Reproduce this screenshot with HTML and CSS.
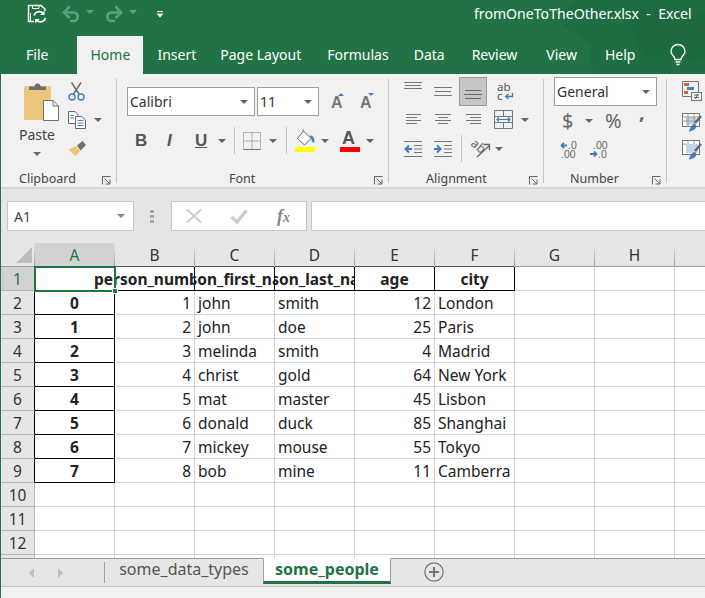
FILE: index.html
```html
<!DOCTYPE html>
<html lang="en">
<head>
    <meta charset="UTF-8">
    <title>fromOneToTheOther.xlsx - Excel</title>
    <link rel="stylesheet" href="styles.css">
</head>
<body>
<div class="window">

    <!-- green header: quick access + tabs -->
    <header class="header">
        <svg class="header-pattern" width="170" height="74" viewBox="0 0 170 74">
            <path d="M40 0 L170 0 L170 74 L60 74 C50 60 62 50 50 40 C34 30 20 22 28 12 Z" fill="#1f6d42"/>
            <path d="M100 10 C125 5 150 20 170 12 L170 60 C150 66 130 50 110 56 C100 40 92 24 100 10 Z" fill="#1d6a40"/>
        </svg>
        <div class="titlebar">
            <svg class="qat-save" width="20" height="20" viewBox="0 0 20 20" fill="none" stroke="#fff">
                <path d="M7 17.500H1.500V1.500H14L18 5V7" stroke-width="1.400"/>
                <path d="M5.500 1.500V4.500H12V1.500M3.500 9V17" stroke-width="1"/>
                <path d="M7 11.500A5.300 5.300 0 0 1 16.500 10M18.500 14A5.300 5.300 0 0 1 9 15.500" stroke-width="1.600"/>
                <path d="M17.500 6.500V11H13ZM8 19.500V15H12.500Z" fill="#fff" stroke="none"/>
            </svg>
            <svg class="qat-undo" width="18" height="18" viewBox="0 0 18 18" fill="none" stroke="#5f9e7e" stroke-width="2.600">
                <path d="M2.500 7.500H11.500A4.200 4.200 0 0 1 11.500 16H8"/>
                <path d="M7.500 1.500L2 7.500L7.500 13"/>
            </svg>
            <span class="qat-caret"></span>
            <svg class="qat-redo" width="18" height="18" viewBox="0 0 18 18" fill="none" stroke="#5f9e7e" stroke-width="2.600">
                <path d="M15.500 7.500H6.500A4.200 4.200 0 0 0 6.500 16H10"/>
                <path d="M10.500 1.500L16 7.500L10.500 13"/>
            </svg>
            <span class="qat-caret"></span>
            <svg class="qat-more" width="8" height="7" viewBox="0 0 8 7">
                <path d="M1 0.500H7" stroke="#fff"/>
                <path d="M0.500 2.500H7.500L4 6.500Z" fill="#fff"/>
            </svg>
            <div class="doc-title">fromOneToTheOther.xlsx&nbsp; -&nbsp; Excel</div>
        </div>
        <nav class="tabs">
            <a class="tab tab-file">File</a>
            <a class="tab tab-home">Home</a>
            <a class="tab tab-insert">Insert</a>
            <a class="tab tab-layout">Page Layout</a>
            <a class="tab tab-formulas">Formulas</a>
            <a class="tab tab-data">Data</a>
            <a class="tab tab-review">Review</a>
            <a class="tab tab-view">View</a>
            <a class="tab tab-help">Help</a>
            <svg class="bulb" width="16" height="22" viewBox="0 0 16 22" fill="none" stroke="#fff" stroke-width="1.300">
                <path d="M5 15.500C5 12 1 11 1 7.500A7 7 0 0 1 15 7.500C15 11 11 12 11 15.500Z"/>
                <path d="M5.500 18H10.500M6.500 20.500H9.500"/>
            </svg>
        </nav>
    </header>

    <!-- ribbon -->
    <section class="ribbon">

        <div class="group group-clipboard">
            <div class="clip-body">
                <div class="paste">
                    <svg width="36" height="42" viewBox="0 0 36 42">
                        <rect x="0" y="4" width="27" height="34" rx="1.500" fill="#edc67e"/>
                        <path d="M5 8V4.500H10.500A3 3 0 0 1 16.500 4.500H22V8Z" fill="#6f6f6f"/>
                        <path d="M19.500 18.500H29L34.500 24V38.500H19.500Z" fill="#fff" stroke="#6f6f6f"/>
                        <path d="M29 18.500V24H34.500" fill="none" stroke="#6f6f6f"/>
                    </svg>
                    <span class="paste-label">Paste</span>
                    <span class="caret"></span>
                </div>
                <div class="clip-tools">
                    <svg class="tool-cut" width="17" height="19" viewBox="0 0 17 19" fill="none">
                        <path d="M3.500 0.500L11 12M13 0.500L5.500 12" stroke="#6a6a6a" stroke-width="1.500"/>
                        <circle cx="4" cy="15" r="3" stroke="#3f7fc1" stroke-width="1.400"/>
                        <circle cx="13" cy="15" r="3" stroke="#3f7fc1" stroke-width="1.400"/>
                    </svg>
                    <div class="tool-copy">
                        <svg width="18" height="18" viewBox="0 0 18 18" fill="#fff" stroke="#666">
                            <path d="M0.500 0.500H7L10 3.500V12.500H0.500Z"/>
                            <path d="M7.500 5.500H13.500L17.500 9V17.500H7.500Z"/>
                            <path d="M2.500 4.500H6M2.500 7H6M9.500 9.500H15.500M9.500 12H15.500M9.500 14.500H15.500" stroke="#3f7fc1"/>
                        </svg>
                        <span class="caret"></span>
                    </div>
                    <svg class="tool-painter" width="19" height="17" viewBox="0 0 19 17">
                        <path d="M0.500 9.500L8 6L12 11L7.500 16.500C5 14 3 11 0.500 9.500Z" fill="#edc67e"/>
                        <path d="M9 5.500L14.500 1L18 5L12.500 10.500Z" fill="#6f6f6f"/>
                    </svg>
                </div>
            </div>
            <div class="group-foot">
                <span class="group-label">Clipboard</span>
                <svg class="launcher" width="9" height="9" viewBox="0 0 9 9" fill="none" stroke="#666"><path d="M0.500 8.500V0.500H8.500M2.500 2.500L7.500 7.500M8 3.500V8H3.500"/></svg>
            </div>
        </div>

        <div class="group group-font">
            <div class="font-row1">
                <div class="select select-font"><span>Calibri</span><span class="caret"></span></div>
                <div class="select select-size"><span>11</span><span class="caret"></span></div>
                <svg class="font-grow" width="16" height="20" viewBox="0 0 16 20">
                    <text x="0" y="16" class="svg-a">A</text>
                    <path d="M7 4L10 1L13 4Z" fill="#3f7fc1"/>
                </svg>
                <svg class="font-shrink" width="16" height="20" viewBox="0 0 16 20">
                    <text x="0" y="16" class="svg-a">A</text>
                    <path d="M8 1H14L11 4Z" fill="#3f7fc1"/>
                </svg>
            </div>
            <div class="font-row2">
                <span class="fmt fmt-b">B</span>
                <span class="fmt fmt-i">I</span>
                <span class="fmt fmt-u">U</span>
                <span class="caret"></span>
                <span class="rule"></span>
                <svg width="18" height="18" viewBox="0 0 18 18" fill="none" stroke="#777">
                    <path d="M0.500 0.500H17.500V17.500H0.500ZM9 0.500V17.500M0.500 9H17.500" stroke-dasharray="1 1"/>
                    <path d="M0.500 17.500H17.500"/>
                </svg>
                <span class="caret"></span>
                <span class="rule"></span>
                <svg width="21" height="23" viewBox="0 0 21 23">
                    <path d="M8.500 2L16 9.500L9.500 16L2.500 9.500Z" fill="#fff" stroke="#666"/>
                    <path d="M8 2.500V0.500" stroke="#666"/>
                    <path d="M14.500 6.500C17 6 19.500 8 19.500 12C19.500 14 17.500 14 17 12C16.800 10.500 16 9.500 14.500 6.500Z" fill="#3f7fc1"/>
                    <rect x="0" y="18" width="20" height="5" fill="#ffff00"/>
                </svg>
                <span class="caret"></span>
                <svg width="20" height="23" viewBox="0 0 20 23">
                    <text x="2" y="15" class="svg-color-a">A</text>
                    <rect x="0" y="18" width="20" height="5" fill="#ff0000"/>
                </svg>
                <span class="caret"></span>
            </div>
            <div class="group-foot">
                <span class="group-label">Font</span>
                <svg class="launcher" width="9" height="9" viewBox="0 0 9 9" fill="none" stroke="#666"><path d="M0.500 8.500V0.500H8.500M2.500 2.500L7.500 7.500M8 3.500V8H3.500"/></svg>
            </div>
        </div>

        <div class="group group-align">
            <div class="align-row1">
                <svg class="align-top" width="18" height="8" viewBox="0 0 18 8" stroke="#777"><path d="M0 0.500H18M1 3.500H17M0 6.500H18"/></svg>
                <svg width="18" height="11" viewBox="0 0 18 11" stroke="#777"><path d="M0 1.500H18M1 5.500H17M0 9.500H18"/></svg>
                <div class="align-active">
                    <svg width="18" height="11" viewBox="0 0 18 11" stroke="#666"><path d="M1 1.500H17M0 5.500H18M1 9.500H17"/></svg>
                </div>
                <svg class="align-wrap" width="17" height="18" viewBox="0 0 17 18">
                    <text x="0" y="8" class="svg-small">ab</text>
                    <text x="0" y="17" class="svg-small">c</text>
                    <path d="M15.500 10V13.500H9M11.500 11L8.500 13.500L11.500 16" fill="none" stroke="#3f7fc1" stroke-width="1.300"/>
                </svg>
            </div>
            <div class="align-row2">
                <svg width="15" height="11" viewBox="0 0 15 11" stroke="#777"><path d="M0 0.500H15M0 3.500H11M0 6.500H15M0 9.500H11"/></svg>
                <svg width="16" height="11" viewBox="0 0 16 11" stroke="#777"><path d="M0 0.500H16M3 3.500H13M0 6.500H16M3 9.500H13"/></svg>
                <svg width="15" height="11" viewBox="0 0 15 11" stroke="#777"><path d="M0 0.500H15M4 3.500H15M0 6.500H15M4 9.500H15"/></svg>
                <svg width="19" height="19" viewBox="0 0 19 19" fill="none">
                    <path d="M0.500 0.500H18.500V18.500H0.500ZM0.500 6.500H18.500M0.500 12.500H18.500M9.500 0.500V6.500M9.500 12.500V18.500" stroke="#777"/>
                    <rect x="1" y="7" width="17" height="5" fill="#f1f1f1"/>
                    <path d="M3 9.500H16M5 7.500L3 9.500L5 11.500M14 7.500L16 9.500L14 11.500" stroke="#3f7fc1" stroke-width="1.200"/>
                </svg>
                <span class="caret"></span>
            </div>
            <div class="align-row3">
                <svg width="18" height="16" viewBox="0 0 18 16" fill="none">
                    <path d="M0 0.500H18M10 4.500H18M10 8H18M10 11.500H18M0 15.500H18" stroke="#777"/>
                    <path d="M8 8H1.500M5 4.500L1.500 8L5 11.500" stroke="#3f7fc1" stroke-width="2"/>
                </svg>
                <svg width="18" height="16" viewBox="0 0 18 16" fill="none">
                    <path d="M0 0.500H18M10 4.500H18M10 8H18M10 11.500H18M0 15.500H18" stroke="#777"/>
                    <path d="M0 8H6.500M3 4.500L6.500 8L3 11.500" stroke="#3f7fc1" stroke-width="2"/>
                </svg>
                <span class="rule"></span>
                <svg class="align-orient" width="20" height="19" viewBox="0 0 20 19" fill="none">
                    <text x="0" y="10" class="svg-orient" transform="rotate(40 6 8)">ab</text>
                    <path d="M7 18L19 7M13.500 5.500H19.500V11" stroke="#666" stroke-width="1.300"/>
                </svg>
                <span class="caret"></span>
            </div>
            <div class="group-foot">
                <span class="group-label">Alignment</span>
                <svg class="launcher" width="9" height="9" viewBox="0 0 9 9" fill="none" stroke="#666"><path d="M0.500 8.500V0.500H8.500M2.500 2.500L7.500 7.500M8 3.500V8H3.500"/></svg>
            </div>
        </div>

        <div class="group group-number">
            <div class="select select-format"><span>General</span><span class="caret"></span></div>
            <div class="number-row2">
                <span class="num-sym num-dollar">$</span>
                <span class="caret"></span>
                <span class="num-sym num-pct">%</span>
                <span class="num-sym num-comma">,</span>
            </div>
            <div class="number-row3">
                <svg width="16" height="17" viewBox="0 0 16 17">
                    <path d="M7 4.500H1.500M4 2L1.500 4.500L4 7" fill="none" stroke="#3f7fc1" stroke-width="1.800"/>
                    <text x="8" y="8" class="svg-dec">.0</text>
                    <text x="1" y="17" class="svg-dec">.00</text>
                </svg>
                <svg width="16" height="17" viewBox="0 0 16 17">
                    <text x="3" y="8" class="svg-dec">.00</text>
                    <path d="M0 13H6.500M4 10.500L6.500 13L4 15.500" fill="none" stroke="#3f7fc1" stroke-width="1.800"/>
                    <text x="8" y="17" class="svg-dec">.0</text>
                </svg>
            </div>
            <div class="group-foot">
                <span class="group-label">Number</span>
                <svg class="launcher" width="9" height="9" viewBox="0 0 9 9" fill="none" stroke="#666"><path d="M0.500 8.500V0.500H8.500M2.500 2.500L7.500 7.500M8 3.500V8H3.500"/></svg>
            </div>
        </div>

        <div class="group-styles">
            <svg width="20" height="20" viewBox="0 0 20 20" fill="none">
                <path d="M0.500 0.500H16.500V15.500H0.500Z" stroke="#777"/>
                <rect x="2" y="2" width="5" height="3" fill="#d5633a"/>
                <rect x="5" y="6" width="7" height="3" fill="#3f7fc1"/>
                <rect x="2" y="10" width="4" height="3" fill="#d5633a"/>
                <rect x="9.500" y="11.500" width="10" height="8" fill="#f1f1f1" stroke="#777"/>
                <path d="M12 14H17M12 16.500H17M15.500 13L13.500 18" stroke="#666"/>
            </svg>
            <svg width="20" height="19" viewBox="0 0 20 19" fill="none">
                <rect x="0.500" y="0.500" width="17" height="13" fill="#fff" stroke="#777"/>
                <rect x="4" y="4" width="10" height="8" fill="#c5d5e8"/>
                <path d="M0.500 4H17.500M0.500 8H17.500M6 0.500V13.500M12 0.500V13.500" stroke="#999"/>
                <path d="M13 10L19 3" stroke="#666" stroke-width="2.500"/>
                <path d="M7 18.500C8 14 10 11.500 13 11L14.500 13C14 16 11 18 7 18.500Z" fill="#3f7fc1"/>
            </svg>
            <svg width="20" height="20" viewBox="0 0 20 20" fill="none">
                <rect x="0.500" y="0.500" width="17" height="14" fill="#fff" stroke="#777"/>
                <rect x="4" y="4" width="12" height="9" fill="#c5d5e8"/>
                <path d="M0.500 4H4M6 0.500V4M12 0.500V4" stroke="#999"/>
                <path d="M13 11L19 4" stroke="#666" stroke-width="2.500"/>
                <path d="M7 19.500C8 15 10 12.500 13 12L14.500 14C14 17 11 19 7 19.500Z" fill="#3f7fc1"/>
            </svg>
        </div>
    </section>

    <!-- name box + formula bar -->
    <section class="formula-band">
        <div class="name-box"><span>A1</span><span class="caret"></span></div>
        <span class="grip"></span>
        <div class="fx-buttons">
            <svg class="fx-cancel" width="16" height="16" viewBox="0 0 16 16" fill="none" stroke="#cdcdcd" stroke-width="2"><path d="M1 1.500L15 14.500M15 1.500L1 14.500"/></svg>
            <svg class="fx-enter" width="18" height="15" viewBox="0 0 18 15" fill="none" stroke="#cdcdcd" stroke-width="3.500"><path d="M1.500 8L7 13L16.500 1.500"/></svg>
            <span class="fx-label"><i>f</i><i class="fx-x">x</i></span>
        </div>
        <div class="formula-input"></div>
    </section>

    <!-- sheet -->
    <section class="sheet">
        <table class="grid">
            <colgroup>
                <col class="col-head">
                <col class="col-cell"><col class="col-cell"><col class="col-cell"><col class="col-cell">
                <col class="col-cell"><col class="col-cell"><col class="col-cell"><col class="col-cell">
                <col class="col-cell">
            </colgroup>
            <thead>
                <tr>
                    <th class="corner"><span class="corner-mark"></span></th>
                    <th class="active-col">A</th><th class="used">B</th><th class="used">C</th><th class="used">D</th><th class="used">E</th><th class="used">F</th><th>G</th><th>H</th><th></th>
                </tr>
            </thead>
            <tbody>
                <tr class="title-row">
                    <th class="row-num active-row">1</th>
                    <td class="blk"></td>
                    <td class="blk spill-left"><div class="mid">person_number</div></td>
                    <td class="blk clipped"><div class="mid">person_first_name</div></td>
                    <td class="blk clipped"><div class="mid">person_last_name</div></td>
                    <td class="blk"><div class="mid">age</div></td>
                    <td class="blk"><div class="mid">city</div></td>
                    <td></td><td></td><td></td>
                </tr>
                <tr><th class="row-num side">2</th><td class="blk idx">0</td><td class="n">1</td><td>john</td><td>smith</td><td class="n">12</td><td>London</td><td></td><td></td><td></td></tr>
                <tr><th class="row-num side">3</th><td class="blk idx">1</td><td class="n">2</td><td>john</td><td>doe</td><td class="n">25</td><td>Paris</td><td></td><td></td><td></td></tr>
                <tr><th class="row-num side">4</th><td class="blk idx">2</td><td class="n">3</td><td>melinda</td><td>smith</td><td class="n">4</td><td>Madrid</td><td></td><td></td><td></td></tr>
                <tr><th class="row-num side">5</th><td class="blk idx">3</td><td class="n">4</td><td>christ</td><td>gold</td><td class="n">64</td><td>New York</td><td></td><td></td><td></td></tr>
                <tr><th class="row-num side">6</th><td class="blk idx">4</td><td class="n">5</td><td>mat</td><td>master</td><td class="n">45</td><td>Lisbon</td><td></td><td></td><td></td></tr>
                <tr><th class="row-num side">7</th><td class="blk idx">5</td><td class="n">6</td><td>donald</td><td>duck</td><td class="n">85</td><td>Shanghai</td><td></td><td></td><td></td></tr>
                <tr><th class="row-num side">8</th><td class="blk idx">6</td><td class="n">7</td><td>mickey</td><td>mouse</td><td class="n">55</td><td>Tokyo</td><td></td><td></td><td></td></tr>
                <tr><th class="row-num side">9</th><td class="blk idx">7</td><td class="n">8</td><td>bob</td><td>mine</td><td class="n">11</td><td>Camberra</td><td></td><td></td><td></td></tr>
                <tr><th class="row-num">10</th><td></td><td></td><td></td><td></td><td></td><td></td><td></td><td></td><td></td></tr>
                <tr><th class="row-num">11</th><td></td><td></td><td></td><td></td><td></td><td></td><td></td><td></td><td></td></tr>
                <tr><th class="row-num">12</th><td></td><td></td><td></td><td></td><td></td><td></td><td></td><td></td><td></td></tr>
                <tr><th class="row-num"></th><td></td><td></td><td></td><td></td><td></td><td></td><td></td><td></td><td></td></tr>
            </tbody>
        </table>
        <div class="sel-frame"><span class="handle"></span></div>
    </section>

    <!-- sheet tabs -->
    <footer class="sheet-bar">
        <span class="nav-arrow nav-prev"></span>
        <span class="nav-arrow nav-next"></span>
        <span class="sheet-sep"></span>
        <span class="sheet-tab">some_data_types</span>
        <span class="sheet-tab sheet-tab-active">some_people</span>
        <svg class="add-sheet" width="20" height="20" viewBox="0 0 20 20" fill="none" stroke="#777">
            <circle cx="10" cy="10" r="9.200" stroke-width="1.200"/>
            <path d="M10 5V15M5 10H15" stroke-width="2"/>
        </svg>
    </footer>
    <div class="status-bar"></div>
</div>
</body>
</html>
```

FILE: styles.css
```css
* {
    box-sizing: border-box;
}

body {
    margin: 0;
    font-family: "Noto Sans", sans-serif;
    color: #444;
}

svg {
    overflow: visible;
}

.window {
    width: 705px;
    height: 598px;
    overflow: hidden;
    border-left: 1px solid #217346;
    background-color: #e6e6e6;
}

/* header */
.header {
    position: relative;
    height: 74px;
    margin-left: -1px;
    background-color: #217346;
    color: #fff;
}

.header-pattern {
    position: absolute;
    top: 0;
    right: 0;
    overflow: hidden;
}

.titlebar {
    position: relative;
    display: flex;
    align-items: center;
    height: 36px;
    padding: 0 0 8px 27px;
}

.qat-undo {
    margin-left: 15px;
}

.qat-redo {
    margin-left: 11px;
}

.qat-caret {
    width: 0;
    height: 0;
    margin-left: 6px;
    border-left: 4px solid transparent;
    border-right: 4px solid transparent;
    border-top: 4px solid #5f9e7e;
    margin-top: -5px;
}

.qat-more {
    margin-left: 19px;
}

.doc-title {
    position: absolute;
    top: 3px;
    left: 474px;
    font-size: 14.100px;
    line-height: 22px;
    white-space: nowrap;
}

.tabs {
    position: relative;
    display: flex;
    align-items: center;
    height: 38px;
    font-size: 14px;
}

.tab {
    height: 38px;
    line-height: 38px;
    white-space: nowrap;
}

.tab-file { margin-left: 26px; }
.tab-insert { margin-left: 14px; }
.tab-layout { margin-left: 24px; }
.tab-formulas { margin-left: 26px; }
.tab-data { margin-left: 25px; }
.tab-review { margin-left: 27px; }
.tab-view { margin-left: 29px; }
.tab-help { margin-left: 28px; }

.tab-home {
    width: 66px;
    margin-left: 29px;
    background-color: #f1f1f1;
    color: #217346;
    text-align: center;
}

.bulb {
    margin-left: 35px;
}

/* ribbon */
.ribbon {
    display: flex;
    height: 115px;
    background-color: #f1f1f1;
    border-bottom: 2px solid #d6d6d6;
    font-size: 13px;
    overflow: hidden;
}

.group {
    display: flex;
    flex-direction: column;
    height: 104px;
    margin-top: 5px;
    border-right: 1px solid #c6c6c6;
}

.group-foot {
    display: flex;
    align-items: center;
    justify-content: space-between;
    height: 16px;
    margin-top: auto;
    margin-bottom: -3px;
    padding-right: 5px;
}

.group-label {
    font-size: 12.500px;
    color: #444;
}

.group-clipboard .group-label { margin-left: 18px; }
.group-font .group-label { margin-left: 102px; }
.group-align .group-label { margin-left: 22px; }
.group-number .group-label { margin-left: 16px; }

.launcher {
    margin-top: 4px;
}

.caret {
    display: inline-block;
    width: 0;
    height: 0;
    border-left: 4px solid transparent;
    border-right: 4px solid transparent;
    border-top: 4px solid #666;
}

.rule {
    display: block;
    width: 1px;
    height: 27px;
    background-color: #c6c6c6;
}

.select {
    display: flex;
    align-items: center;
    justify-content: space-between;
    height: 29px;
    padding: 0 6px 0 2px;
    background-color: #fff;
    border: 1px solid #9e9e9e;
    font-size: 14px;
    color: #333;
}

/* clipboard */
.group-clipboard {
    width: 116px;
}

.clip-body {
    display: flex;
    padding-top: 3px;
}

.paste {
    display: flex;
    flex-direction: column;
    align-items: center;
    width: 42px;
    margin-left: 16px;
}

.paste svg {
    margin-left: 7px;
}

.paste-label {
    font-size: 14px;
    line-height: 20px;
    margin-top: 1px;
    margin-left: -2px;
}

.paste .caret {
    margin: 7px 0 0 -2px;
}

.clip-tools {
    display: flex;
    flex-direction: column;
    margin-left: 9px;
}

.tool-copy {
    display: flex;
    align-items: center;
    margin-top: 10px;
}

.tool-copy .caret {
    margin-left: 8px;
}

.tool-painter {
    margin-top: 11px;
}

/* font */
.group-font {
    width: 272px;
    padding-left: 10px;
}

.font-row1 {
    display: flex;
    align-items: center;
    margin-top: 8px;
}

.select-font {
    width: 128px;
}

.select-size {
    width: 62px;
    margin-left: 2px;
}

.font-grow {
    margin-left: 12px;
}

.font-shrink {
    margin-left: 13px;
}

.font-row2 {
    display: grid;
    grid-template-columns: 32px 28px 23px 16px 9px 26px 17px 9px 26px 19px 26px 8px;
    align-items: center;
    justify-items: start;
    height: 27px;
    margin: 11px 0 0 8px;
}

.fmt {
    font-family: "Liberation Sans", sans-serif;
    font-size: 17px;
    font-weight: bold;
    color: #555;
}

.fmt-i {
    font-style: italic;
}

.fmt-u {
    text-decoration: underline;
}

.svg-a {
    font-family: "Liberation Sans", sans-serif;
    font-size: 16px;
    font-weight: bold;
    fill: #777;
}

.svg-color-a {
    font-family: "Liberation Sans", sans-serif;
    font-size: 18px;
    font-weight: bold;
    fill: #555;
}

/* alignment */
.group-align {
    width: 155px;
    padding-left: 15px;
}

.align-row1 {
    display: grid;
    grid-template-columns: 30px 25px 38px 17px;
    align-items: center;
    justify-items: start;
    height: 29px;
    margin-top: -2px;
}

.align-top {
    align-self: start;
    margin-top: 5px;
}

.align-active {
    display: flex;
    align-items: flex-end;
    justify-content: center;
    width: 28px;
    height: 29px;
    padding-bottom: 5px;
    background-color: #c6c6c6;
    border: 1px solid #9a9a9a;
}

.align-row2 {
    display: grid;
    grid-template-columns: 29px 31px 28px 27px 8px;
    align-items: center;
    justify-items: start;
    height: 19px;
    margin: 4px 0 0 2px;
}

.align-row3 {
    display: grid;
    grid-template-columns: 30px 27px 9px 25px 8px;
    align-items: center;
    justify-items: start;
    height: 27px;
    margin-top: 6px;
}

.svg-small {
    font-family: "Noto Sans", sans-serif;
    font-size: 11.500px;
    fill: #555;
}

.svg-orient {
    font-family: "Noto Sans", sans-serif;
    font-size: 12.500px;
    fill: #666;
}

/* number */
.group-number {
    width: 123px;
    padding-left: 10px;
}

.select-format {
    width: 103px;
    margin-top: -2px;
}

.number-row2 {
    display: grid;
    grid-template-columns: 23px 20px 34px 10px;
    align-items: center;
    justify-items: start;
    height: 26px;
    margin: 2px 0 0 8px;
    color: #666;
}

.num-sym {
    font-size: 20px;
    line-height: 26px;
}

.num-comma {
    font-weight: bold;
    margin-top: -19px;
}

.number-row3 {
    display: flex;
    gap: 14px;
    margin: 7px 0 0 6px;
}

.svg-dec {
    font-family: "Liberation Sans", sans-serif;
    font-size: 10.500px;
    fill: #666;
}

/* styles */
.group-styles {
    display: flex;
    flex-direction: column;
    gap: 12px;
    padding: 7px 0 0 15px;
}

.group-styles svg:last-child {
    margin-top: -4px;
}

/* formula bar */
.formula-band {
    display: flex;
    align-items: center;
    height: 54px;
    padding: 0 0 0 6px;
}

.name-box {
    display: flex;
    align-items: center;
    justify-content: space-between;
    width: 127px;
    height: 30px;
    padding: 0 8px 0 6px;
    background-color: #fff;
    border: 1px solid #c6c6c6;
    font-size: 14px;
    color: #444;
}

.name-box .caret {
    border-top-color: #888;
}

.grip {
    width: 4px;
    height: 13px;
    margin-left: 16px;
    background: repeating-linear-gradient(#aaa 0 3px, transparent 3px 5px);
}

.fx-buttons {
    display: flex;
    align-items: center;
    width: 136px;
    height: 30px;
    margin-left: 17px;
    padding-left: 14px;
    background-color: #fff;
    border: 1px solid #c6c6c6;
}

.fx-enter {
    margin-left: 28px;
}

.fx-label {
    margin-left: 29px;
    font-family: "Liberation Serif", serif;
    font-size: 18px;
    font-weight: bold;
    color: #888;
}

.fx-x {
    font-size: 14px;
}

.formula-input {
    flex: 1;
    height: 30px;
    margin-left: 4px;
    background-color: #fff;
    border: 1px solid #c6c6c6;
    border-right: none;
}

/* sheet */
.sheet {
    position: relative;
    height: 315px;
    overflow: hidden;
    background-color: #fff;
}

.grid {
    table-layout: fixed;
    width: 754px;
    border-collapse: separate;
    border-spacing: 0;
    font-size: 15.500px;
    color: #222;
}

.col-head {
    width: 34px;
}

.col-cell {
    width: 80px;
}

.grid th,
.grid td {
    height: 24px;
    padding: 0;
    overflow: hidden;
    white-space: nowrap;
}

.grid td {
    padding: 0 3px;
    border-right: 1px solid #d4d4d4;
    border-bottom: 1px solid #d4d4d4;
}

.grid th {
    background-color: #e6e6e6;
    border-right: 1px solid #b5b5b5;
    border-bottom: 1px solid #b5b5b5;
    font-weight: normal;
    font-size: 15.500px;
    color: #333;
}

/* column heads have a separator that fades out towards the top */
.grid thead th {
    position: relative;
    overflow: visible;
    border-right-color: transparent;
    border-bottom-color: #9e9e9e;
    background-clip: padding-box;
}

.grid thead th::after {
    content: "";
    position: absolute;
    top: 0;
    right: -1px;
    bottom: 0;
    width: 1px;
    background: linear-gradient(#e6e6e6, #9e9e9e);
}

.corner-mark {
    position: absolute;
    right: 2px;
    bottom: 3px;
    width: 0;
    height: 0;
    border-left: 16px solid transparent;
    border-bottom: 16px solid #bdbdbd;
}

.grid .active-col {
    background-color: #d2d2d2;
    color: #217346;
}

.grid .active-row {
    background-color: #d2d2d2;
    color: #217346;
}

.grid thead .used {
    border-bottom-color: #555;
}

.grid td.blk {
    border-right-color: #000;
    border-bottom-color: #000;
}

.grid .side {
    border-right-color: #000;
}

.idx {
    font-weight: bold;
    text-align: center;
}

.n {
    text-align: right;
}

.title-row td {
    padding: 0;
    font-weight: bold;
}

.mid {
    display: flex;
    justify-content: center;
}

.spill-left {
    position: relative;
    clip-path: inset(0 0 0 -40px);
}

.grid td.spill-left {
    overflow: visible;
}

/* selection frame over cell A1 */
.sel-frame {
    position: absolute;
    top: 23px;
    left: 33px;
    z-index: 5;
    width: 82px;
    height: 26px;
    border: 2px solid #217346;
}

.handle {
    position: absolute;
    right: -4px;
    bottom: -4px;
    width: 6px;
    height: 6px;
    background-color: #217346;
    border: 1px solid #fff;
}

/* sheet tabs */
.sheet-bar {
    display: flex;
    align-items: flex-start;
    height: 29px;
    background-color: #e6e6e6;
    border-top: 1px solid #9e9e9e;
    border-bottom: 1px solid #c6c6c6;
    font-size: 16px;
    color: #555;
}

.nav-arrow {
    width: 0;
    height: 0;
    margin-top: 9px;
    border-top: 5px solid transparent;
    border-bottom: 5px solid transparent;
}

.nav-prev {
    margin-left: 28px;
    border-right: 5px solid #c0c0c0;
}

.nav-next {
    margin-left: 24px;
    border-left: 5px solid #c0c0c0;
}

.sheet-sep {
    width: 1px;
    height: 21px;
    margin: 3px 0 0 41px;
    background-color: #9e9e9e;
}

.sheet-tab {
    width: 158px;
    height: 24px;
    line-height: 20px;
    text-align: center;
}

.sheet-tab-active {
    width: 128px;
    margin-top: -1px;
    height: 26px;
    background-color: #fff;
    border: 1px solid #9e9e9e;
    border-top-color: #fff;
    border-bottom: 3px solid #217346;
    color: #217346;
    font-weight: bold;
    line-height: 21px;
}

.add-sheet {
    margin: 3px 0 0 33px;
}

.status-bar {
    height: 11px;
    background-color: #f1f1f1;
}
```
